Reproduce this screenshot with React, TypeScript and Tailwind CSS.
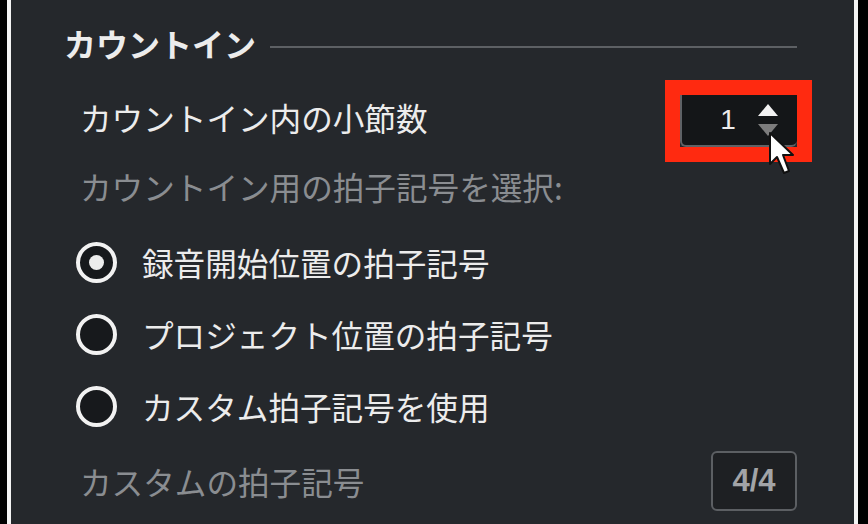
import React, { useState } from 'react';

type Meter = 'start' | 'project' | 'custom';

const jp = { fontFamily: '"Noto Sans CJK JP", "Noto Sans", sans-serif' };

// Round radio button: white ring, dark well, white dot when on
const Radio: React.FC<{ checked: boolean; onClick: () => void }> = ({ checked, onClick }) => (
  <button
    onClick={onClick}
    className="flex h-[41px] w-[41px] shrink-0 items-center justify-center rounded-full border-[4px] border-[#f2f2f2] bg-[#17191c]"
  >
    {checked && <span className="h-[15px] w-[15px] rounded-full bg-[#ececec]" />}
  </button>
);

// Mouse pointer sitting over the stepper
const Pointer: React.FC = () => (
  <svg className="pointer-events-none absolute left-[86px] top-[36px]" width="28" height="46" viewBox="0 0 28 46">
    <path
      d="M2 2 L2 33 L9 26 L16 42 L21 40 L15 24 L25 24 Z"
      fill="#ffffff"
      stroke="#111111"
      strokeWidth="2"
      strokeLinejoin="round"
    />
  </svg>
);

const BarsStepper: React.FC<{ value: number; onChange: (n: number) => void }> = ({ value, onChange }) => (
  // red highlight frame around the field
  <div className="-mr-[15px] -mt-[15px] border-[15px] border-[#ff2a10]">
    <div className="relative h-[52px] w-[117px] rounded-b-md border-b-2 border-l-2 border-[#5f6266] bg-[#141618]">
      <div className="flex h-full items-center">
        <span
          className="w-[76px] pl-[16px] text-center text-[28px] leading-none text-[#ececec]"
          style={{ fontFamily: '"Liberation Sans", sans-serif' }}
        >
          {value}
        </span>
        <div className="flex flex-col items-center gap-[8px]">
          <button onClick={() => onChange(value + 1)} className="h-0 w-0 border-x-[10px] border-b-[12px] border-x-transparent border-b-[#f2f2f2]" />
          <button onClick={() => onChange(Math.max(1, value - 1))} className="h-0 w-0 border-x-[10px] border-t-[12px] border-x-transparent border-t-[#7d7d7d]" />
        </div>
      </div>
      <Pointer />
    </div>
  </div>
);

const App: React.FC = () => {
  const [bars, setBars] = useState<number>(1);
  const [meter, setMeter] = useState<Meter>('start');

  const options: { key: Meter; label: string }[] = [
    { key: 'start', label: '録音開始位置の拍子記号' },
    { key: 'project', label: 'プロジェクト位置の拍子記号' },
    { key: 'custom', label: 'カスタム拍子記号を使用' },
  ];

  return (
    <div className="flex h-[524px] w-[868px] overflow-hidden bg-black" style={jp}>
      {/* Settings panel */}
      <div className="ml-[7px] mr-[10px] flex-1 border-x-[4px] border-[#f4f4f4] bg-[#25282c] pl-[53px] pr-[57px] pt-[20px]">
        {/* Section header */}
        <div className="flex h-[46px] items-center gap-[14px]">
          <span className="text-[32px] font-bold leading-[46px] text-[#ececec]">カウントイン</span>
          <div className="mt-[8px] h-[2px] flex-1 bg-[#5d6064]" />
        </div>

        <div className="pl-[16px]">
          {/* Bars in count-in */}
          <div className="mt-[29px] flex items-start justify-between">
            <span className="-mt-px text-[31.6px] leading-[46px] text-[#ececec]">カウントイン内の小節数</span>
            <BarsStepper value={bars} onChange={setBars} />
          </div>

          <div className="-mt-[17px] pt-[18px] text-[31.6px] leading-[46px] text-[#8a8d91]">カウントイン用の拍子記号を選択:</div>
        </div>

        {/* Meter source */}
        <div className="mt-[17px] pl-[12px]">
          {options.map((o) => (
            <div key={o.key} className="flex h-[72px] items-center gap-[25px]">
              <Radio checked={meter === o.key} onClick={() => setMeter(o.key)} />
              <span className="text-[31.6px] leading-[46px] text-[#ececec]">{o.label}</span>
            </div>
          ))}
        </div>

        {/* Custom meter */}
        <div className="mt-[9px] flex h-[60px] items-center justify-between pl-[16px]">
          <span className="text-[31.6px] leading-[46px] text-[#8a8d91]">カスタムの拍子記号</span>
          <div
            className="flex h-[60px] w-[86px] items-center justify-center rounded-md border-2 border-[#5c5f63] bg-[#1e2023] text-[31px] font-bold text-[#a2a4a7]"
            style={{ fontFamily: '"Liberation Sans", sans-serif' }}
          >
            4/4
          </div>
        </div>
      </div>
    </div>
  );
};

export default App;
